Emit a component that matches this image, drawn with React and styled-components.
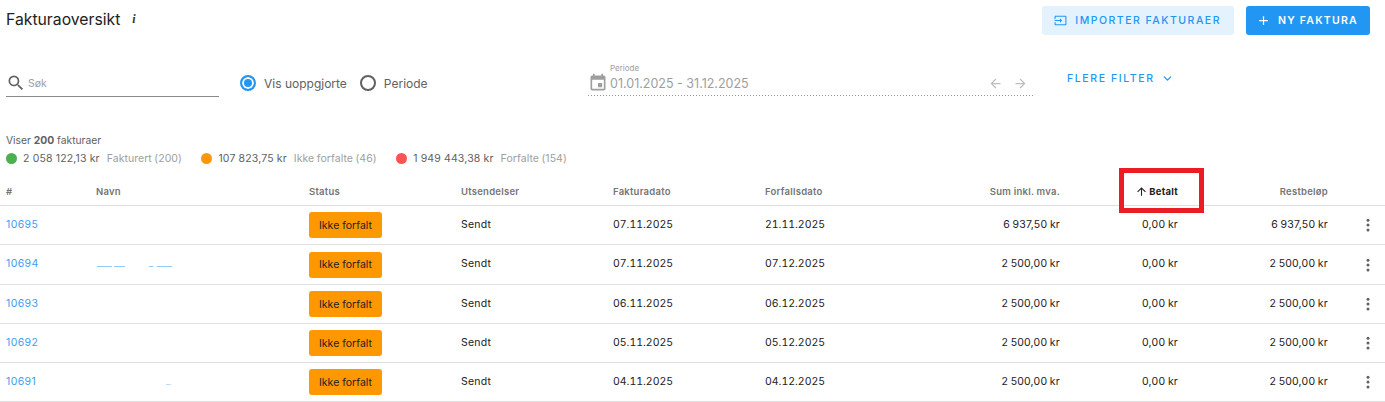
import React from 'react'
import styled, { createGlobalStyle } from 'styled-components'
import { ChevronDown } from 'lucide-react'
import { MdSearch, MdArrowBack, MdArrowForward, MdArrowUpward, MdAdd, MdInput, MdEvent } from 'react-icons/md'

const rows = [
  { id: 10695, smudge: '', invoiced: '07.11.2025', due: '21.11.2025', sum: '6 937,50 kr', rest: '6 937,50 kr' },
  { id: 10694, smudge: 'long', invoiced: '07.11.2025', due: '07.12.2025', sum: '2 500,00 kr', rest: '2 500,00 kr' },
  { id: 10693, smudge: '', invoiced: '06.11.2025', due: '06.12.2025', sum: '2 500,00 kr', rest: '2 500,00 kr' },
  { id: 10692, smudge: '', invoiced: '05.11.2025', due: '05.12.2025', sum: '2 500,00 kr', rest: '2 500,00 kr' },
  { id: 10691, smudge: 'short', invoiced: '04.11.2025', due: '04.12.2025', sum: '2 500,00 kr', rest: '2 500,00 kr' }
]

function MoreIcon () {
  return (
    <svg width="18" height="18" viewBox="0 0 24 24" fill="#616161">
      <circle cx="12" cy="5.5" r="2" />
      <circle cx="12" cy="12" r="2" />
      <circle cx="12" cy="18.5" r="2" />
    </svg>
  )
}

function App () {
  return (
    <Page>
      <GlobalStyle />
      <Header>
        <TitleGroup>
          <Title>Fakturaoversikt</Title>
          <InfoMark>i</InfoMark>
        </TitleGroup>
        <Actions>
          <Button>
            <MdInput size={13} />
            Importer fakturaer
          </Button>
          <Button $primary>
            <MdAdd size={15} />
            Ny faktura
          </Button>
        </Actions>
      </Header>

      <Filters>
        <SearchField>
          <MdSearch size={20} color="#616161" />
          <SearchText>Søk</SearchText>
        </SearchField>
        <RadioGroup>
          <RadioLabel>
            <Radio $checked />
            Vis uoppgjorte
          </RadioLabel>
          <RadioLabel>
            <Radio />
            Periode
          </RadioLabel>
        </RadioGroup>
        <PeriodField>
          <CalendarIcon size={20} />
          <PeriodBody>
            <PeriodLabel>Periode</PeriodLabel>
            <PeriodValue>01.01.2025 - 31.12.2025</PeriodValue>
          </PeriodBody>
          <PeriodArrows>
            <MdArrowBack size={15} />
            <MdArrowForward size={15} />
          </PeriodArrows>
        </PeriodField>
        <MoreFilters>
          Flere filter
          <ChevronDown size={13} strokeWidth={2.4} />
        </MoreFilters>
      </Filters>

      <Summary>
        <Count>Viser <b>200</b> fakturaer</Count>
        <Totals>
          <Total>
            <Dot $color="#4caf50" />
            <Amount>2 058 122,13 kr</Amount>
            <Caption>Fakturert (200)</Caption>
          </Total>
          <Total>
            <Dot $color="#ff9800" />
            <Amount>107 823,75 kr</Amount>
            <Caption>Ikke forfalte (46)</Caption>
          </Total>
          <Total>
            <Dot $color="#ff5252" />
            <Amount>1 949 443,38 kr</Amount>
            <Caption>Forfalte (154)</Caption>
          </Total>
        </Totals>
      </Summary>

      <Table>
        <HeadRow>
          <HeadCell>#</HeadCell>
          <HeadCell>Navn</HeadCell>
          <HeadCell>Status</HeadCell>
          <HeadCell>Utsendelser</HeadCell>
          <HeadCell>Fakturadato</HeadCell>
          <HeadCell>Forfallsdato</HeadCell>
          <HeadCell $right>Sum inkl. mva.</HeadCell>
          <HeadCell $right $active>
            <MdArrowUpward size={13} />
            Betalt
            <Highlight />
          </HeadCell>
          <HeadCell $right>Restbeløp</HeadCell>
          <HeadCell />
        </HeadRow>
        {rows.map(row => (
          <Row key={row.id}>
            <IdCell>{row.id}</IdCell>
            <NameCell>{row.smudge && <Smudge $kind={row.smudge} />}</NameCell>
            <StatusCell><Badge>Ikke forfalt</Badge></StatusCell>
            <Cell>Sendt</Cell>
            <DateCell>{row.invoiced}</DateCell>
            <DateCell>{row.due}</DateCell>
            <Cell $right>{row.sum}</Cell>
            <Cell $right>0,00 kr</Cell>
            <Cell $right>{row.rest}</Cell>
            <MenuCell><MoreIcon /></MenuCell>
          </Row>
        ))}
      </Table>
    </Page>
  )
}

const GlobalStyle = createGlobalStyle`
  html, body {
    margin: 0;
    padding: 0;
    background: #fff;
  }
  body {
    font-family: "Inter", "Liberation Sans", sans-serif;
    overflow: hidden;
  }
`

const Page = styled.div`
  width: 1385px;
  height: 402px;
  overflow: hidden;
`

const Header = styled.header`
  display: flex;
  justify-content: space-between;
  align-items: flex-start;
  height: 70px;
  padding: 6px 15px 0 6px;
  box-sizing: border-box;
`

const TitleGroup = styled.div`
  display: flex;
  align-items: center;
  gap: 12px;
  height: 27px;
`

const Title = styled.h1`
  margin: 0;
  font-size: 15.75px;
  font-weight: 400;
  color: #212121;
`

const InfoMark = styled.span`
  font-family: "Liberation Serif", serif;
  font-style: italic;
  font-weight: 700;
  font-size: 12px;
  color: #333;
  margin-bottom: 1px;
`

const Actions = styled.div`
  display: flex;
  gap: 12px;
`

const Button = styled.button`
  display: flex;
  align-items: center;
  gap: ${p => (p.$primary ? '7px' : '8px')};
  height: 29px;
  padding: ${p => (p.$primary ? '0 12px 0 10px' : '0 13px 0 12px')};
  border: 0;
  border-radius: 3px;
  background: ${p => (p.$primary ? '#2196f3' : '#e3f2fd')};
  color: ${p => (p.$primary ? '#fff' : '#2196f3')};
  font-family: inherit;
  font-size: 10.5px;
  font-weight: ${p => (p.$primary ? 600 : 500)};
  letter-spacing: ${p => (p.$primary ? '1.25px' : '1.5px')};
  text-transform: uppercase;
`

const Filters = styled.div`
  display: flex;
  align-items: flex-start;
  height: 58px;
`

const SearchField = styled.div`
  display: flex;
  align-items: center;
  gap: 2px;
  width: 213px;
  height: 26px;
  margin: 0 21px 0 6px;
  border-bottom: 1px solid #8a8a8a;
`

const SearchText = styled.span`
  font-size: 10.5px;
  color: #9e9e9e;
`

const RadioGroup = styled.div`
  display: flex;
  gap: 13px;
  width: 348px;
  height: 26px;
  align-items: center;
`

const RadioLabel = styled.label`
  display: flex;
  align-items: center;
  gap: 8px;
  font-size: 12px;
  color: #616161;
`

const Radio = styled.span`
  width: 16px;
  height: 16px;
  box-sizing: border-box;
  border-radius: 50%;
  border: 2px solid ${p => (p.$checked ? '#2196f3' : '#616161')};
  background: ${p => (p.$checked ? '#2196f3' : '#fff')};
  box-shadow: ${p => (p.$checked ? 'inset 0 0 0 2px #fff' : 'none')};
`

const PeriodField = styled.div`
  display: flex;
  align-items: flex-end;
  gap: 2px;
  width: 446px;
  height: 41px;
  margin-top: -15px;
  padding-bottom: 5px;
  box-sizing: border-box;
  background-image: linear-gradient(to right, rgba(0, 0, 0, 0.42) 33%, transparent 0);
  background-position: left bottom;
  background-size: 3px 1px;
  background-repeat: repeat-x;
`

const CalendarIcon = styled(MdEvent)`
  color: #9e9e9e;
  margin-bottom: -2px;
`

const PeriodBody = styled.div`
  display: flex;
  flex-direction: column;
  flex: 1;
  gap: 3px;
`

const PeriodLabel = styled.span`
  font-size: 8px;
  color: #9e9e9e;
`

const PeriodValue = styled.span`
  font-size: 12.5px;
  color: #9e9e9e;
`

const PeriodArrows = styled.div`
  display: flex;
  gap: 10px;
  color: #bdbdbd;
  padding-right: 6px;
`

const MoreFilters = styled.div`
  display: flex;
  align-items: center;
  gap: 6px;
  margin: 2px 0 0 33px;
  color: #2196f3;
  font-size: 10.5px;
  font-weight: 500;
  letter-spacing: 1.6px;
  text-transform: uppercase;
`

const Summary = styled.section`
  padding-left: 6px;
  height: 50px;
`

const Count = styled.div`
  font-size: 10.3px;
  color: #616161;
  height: 14px;
  padding-top: 6px;

  b {
    font-weight: 700;
  }
`

const Totals = styled.div`
  display: flex;
  gap: 19.5px;
  margin-top: 4px;
`

const Total = styled.div`
  display: flex;
  align-items: center;
  font-size: 10.5px;
`

const Dot = styled.span`
  width: 11px;
  height: 11px;
  border-radius: 50%;
  background: ${p => p.$color};
  margin-right: 6px;
`

const Amount = styled.span`
  color: #616161;
  letter-spacing: 0.15px;
  margin-right: 7px;
`

const Caption = styled.span`
  color: #9e9e9e;
  letter-spacing: 0.05px;
  word-spacing: -0.5px;
`

const Table = styled.div`
  display: grid;
  grid-template-columns: 90px 213px 152px 152px 152px 152px 155px 118px 150px 51px;
`

const HeadRow = styled.div`
  display: grid;
  grid-column: 1 / -1;
  grid-template-columns: subgrid;
  height: 27px;
  border-bottom: 1px solid #e0e0e0;
`

const Row = styled.div`
  display: grid;
  grid-column: 1 / -1;
  grid-template-columns: subgrid;
  height: 38px;
  border-bottom: 1px solid #e0e0e0;

  &:nth-child(3) {
    height: 39px;
  }
`

const HeadCell = styled.div`
  position: relative;
  display: flex;
  align-items: center;
  justify-content: ${p => (p.$right ? 'flex-end' : 'flex-start')};
  gap: 1px;
  padding: 0 6px;
  font-size: 9.5px;
  font-weight: ${p => (p.$active ? 700 : 600)};
  letter-spacing: 0.25px;
  color: ${p => (p.$active ? '#212121' : '#757575')};
`

const Highlight = styled.span`
  position: absolute;
  left: 53px;
  top: -10px;
  width: 85px;
  height: 45px;
  box-sizing: border-box;
  border: 5px solid #ed1c24;
`

const Cell = styled.div`
  display: flex;
  align-items: center;
  justify-content: ${p => (p.$right ? 'flex-end' : 'flex-start')};
  padding: 0 6px 2px;
  font-size: 10.5px;
  letter-spacing: 0.2px;
  word-spacing: -0.5px;
  color: #212121;
`

const DateCell = styled(Cell)`
  letter-spacing: 0;
  font-variant-numeric: tabular-nums;
`

const IdCell = styled(Cell)`
  color: #3d9df2;
  letter-spacing: 0.4px;
`

const NameCell = styled(Cell)`
  position: relative;
`

const StatusCell = styled(Cell)`
  padding-bottom: 0;
  letter-spacing: 0;
  word-spacing: 0;
`

const Smudge = styled.span`
  position: absolute;
  left: ${p => (p.$kind === 'long' ? '7px' : '76px')};
  top: 21px;
  width: ${p => (p.$kind === 'long' ? '75px' : '5px')};
  height: 1px;
  background: ${p => (p.$kind === 'long'
    ? 'linear-gradient(90deg, #90caf9 0 20%, transparent 20% 22%, #90caf9 22% 37%, transparent 37% 70%, #90caf9 70% 74%, transparent 74% 80%, #90caf9 80% 100%)'
    : '#bbdefb')};
`

const Badge = styled.span`
  display: inline-flex;
  align-items: center;
  justify-content: center;
  width: 73px;
  height: 26px;
  border-radius: 3px;
  background: #ff9800;
  font-size: 10.5px;
  color: #212121;
`

const MenuCell = styled.div`
  display: flex;
  align-items: center;
  justify-content: flex-end;
  padding-right: 8px;
`

export default App
